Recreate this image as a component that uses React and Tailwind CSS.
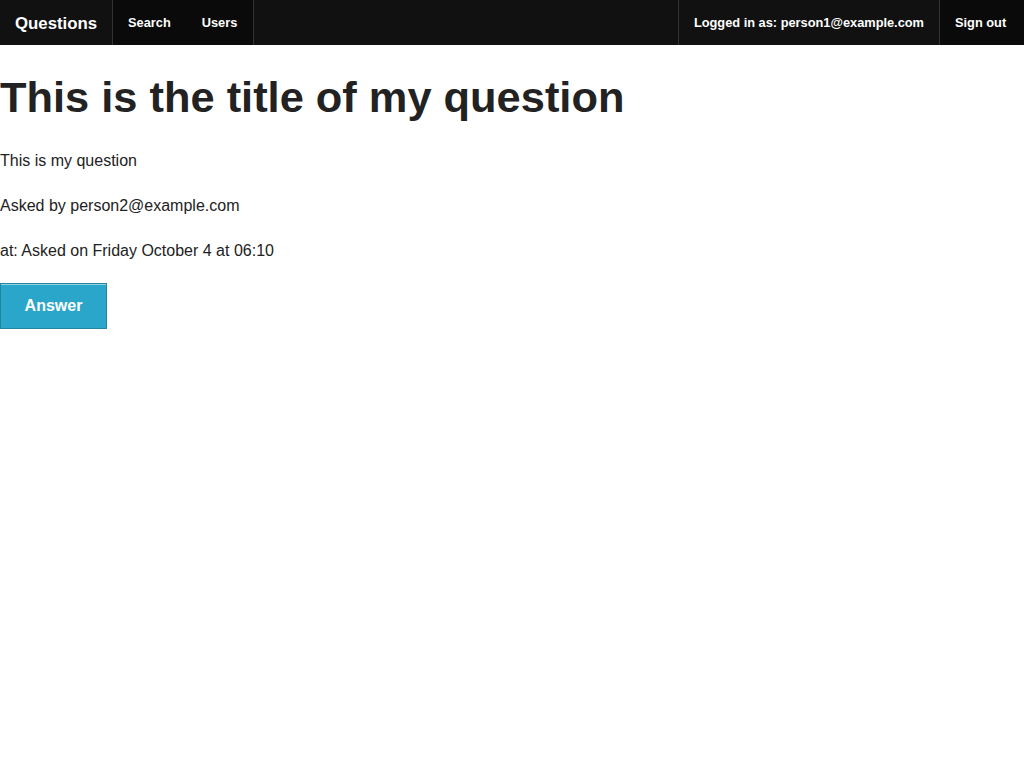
export default function App() {
  return (
    <div className="min-h-screen bg-white text-[#222] font-['Liberation_Sans',Arial,sans-serif]">
      <nav className="flex h-[45px] bg-[#111] text-white">
        <div className="flex items-center px-[15px] pt-[2px] text-[16.8px] font-bold border-r border-[#333]">
          Questions
        </div>
        <div className="flex bg-[#0a0a0a] border-r border-[#333]">
          <a className="flex items-center pl-[15px] pr-[16px] text-[12.8px] font-bold">Search</a>
          <a className="flex items-center pl-[15px] pr-[16px] text-[12.8px] font-bold">Users</a>
        </div>
        <div className="flex-1" />
        <div className="flex items-center px-[15px] text-[12.8px] font-bold border-l border-[#333]">
          Logged in as: person1@example.com
        </div>
        <a className="flex w-[85px] items-center px-[15px] text-[12.8px] font-bold bg-[#0a0a0a] border-l border-[#333]">
          Sign out
        </a>
      </nav>

      <main>
        <h1 className="mt-[25px] mb-[23px] text-[43.4px] leading-[55px] font-bold">
          This is the title of my question
        </h1>
        <p className="mb-[19px] text-base leading-[26px]">This is my question</p>
        <p className="mb-[19px] text-base leading-[26px]">Asked by person2@example.com</p>
        <p className="mb-[19px] text-base leading-[26px]">at: Asked on Friday October 4 at 06:10</p>
        <button className="flex h-[46px] w-[107px] items-center justify-center bg-[#2ba6cb] border border-[#2284a1] text-white text-base font-bold shadow-[inset_0_1px_0_rgba(255,255,255,0.5)]">
          Answer
        </button>
      </main>
    </div>
  )
}
